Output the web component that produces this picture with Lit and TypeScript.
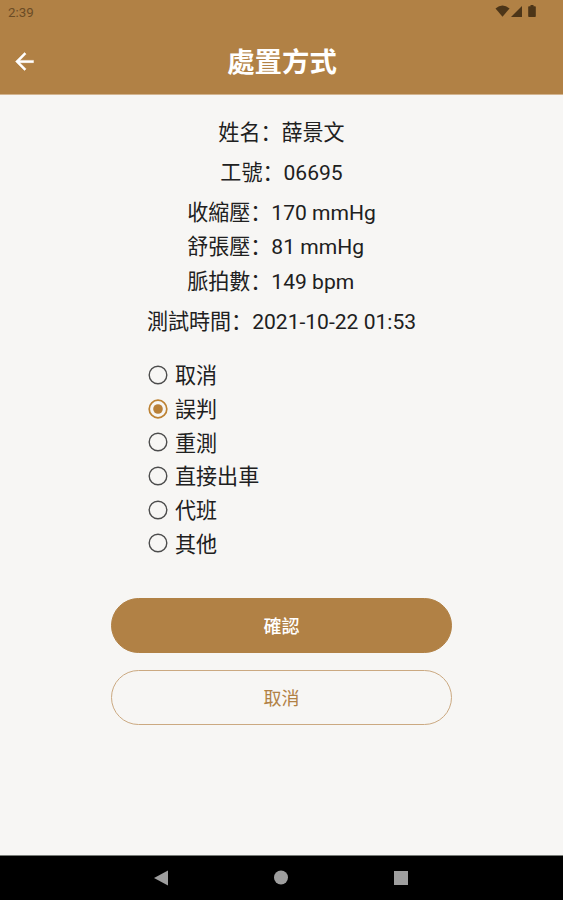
import { LitElement, html, css } from "lit";
import { customElement, state } from "lit/decorators.js";
import { classMap } from "lit/directives/class-map.js";

@customElement("app-root")
export class AppRoot extends LitElement {
  @state() private selected = "誤判";

  private options = ["取消", "誤判", "重測", "直接出車", "代班", "其他"];

  static styles = css`
    :host {
      display: flex;
      flex-direction: column;
      height: 900px;
      box-sizing: border-box;
      background: #f7f6f4;
      color: #202020;
      font-family: Roboto, "Noto Sans CJK SC", sans-serif;
      font-size: 21.05px;
      overflow: hidden;
    }
    .top {
      height: 95px;
      box-sizing: border-box;
      background: #b18145;
      border-bottom: 1px solid #d3b48f;
    }
    .status {
      height: 24px;
      display: flex;
      justify-content: space-between;
      padding: 0 26px 0 8px;
      color: #6b4c25;
      font-size: 13.3px;
      line-height: 25px;
    }
    .status svg {
      display: block;
      margin-top: 4px;
    }
    .bar {
      height: 70px;
      display: grid;
      grid-template-columns: 48px 1fr 48px;
      align-items: center;
      padding-top: 4px;
      box-sizing: border-box;
    }
    .back {
      display: block;
      margin-left: 11px;
    }
    h1 {
      margin: 0;
      padding: 4px 0 0 1px;
      color: #fff;
      text-align: center;
      font-size: 27.4px;
      line-height: 40px;
      font-weight: 700;
    }
    main {
      flex: 1;
      display: flex;
      flex-direction: column;
      align-items: center;
      padding-top: 18px;
    }
    .line {
      height: 40px;
      line-height: 40px;
      white-space: nowrap;
    }
    .readings {
      padding: 3px 0;
    }
    .readings .line {
      height: 34.4px;
      line-height: 34.4px;
    }
    .options {
      width: 267px;
      margin-top: 17px;
    }
    .option {
      display: flex;
      align-items: center;
      gap: 7px;
      height: 33.7px;
      line-height: 33.7px;
    }
    .radio {
      display: block;
      margin-bottom: 2px;
      fill: none;
      stroke: #4c4c4c;
      stroke-width: 1.4;
    }
    .dot {
      fill: none;
      stroke: none;
    }
    .on {
      stroke: #bd8233;
      stroke-width: 1.7;
    }
    .on .dot {
      fill: #b98038;
    }
    .actions {
      display: flex;
      flex-direction: column;
      gap: 17px;
      width: 341px;
      margin-top: 37px;
    }
    button {
      height: 55px;
      border-radius: 28px;
      border: 1px solid #b18145;
      padding: 0 0 2px;
      font-family: inherit;
      font-size: 18px;
    }
    .primary {
      background: #b18145;
      color: #fff;
      font-weight: 500;
    }
    .secondary {
      background: transparent;
      border-color: #cba981;
      color: #b18145;
    }
    .nav {
      height: 45px;
      box-sizing: border-box;
      background: #000;
      border-top: 1px solid #777b76;
      display: flex;
      justify-content: center;
      gap: 104px;
      align-items: center;
      padding-right: 1px;
    }
    .nav svg {
      display: block;
    }
  `;

  render() {
    return html`
      <header class="top">
        <div class="status">
          <span>2:39</span>
          <svg width="42" height="14" viewBox="0 0 42 14" fill="#4c3518">
            <path d="M0.500 4.400Q7.500 -1.500 14.500 4.400L7.500 12.800Z" />
            <path d="M16 13L27 2V13Z" />
            <path d="M34 2.300h1.500V1h3v1.300H40q.8 0 .8 .8V12.200q0 .8-.8 .8h-6q-.8 0-.8-.8V3.100q0-.8 .8-.8Z" />
          </svg>
        </div>
        <div class="bar">
          <svg class="back" width="27" height="27" viewBox="0 0 24 24" fill="#fff" stroke="#fff" stroke-width=".4">
            <path d="M20 11H7.830l5.590-5.590L12 4l-8 8 8 8 1.410-1.410L7.830 13H20v-2z" />
          </svg>
          <h1>處置方式</h1>
        </div>
      </header>
      <main>
        <div class="line">姓名：薛景文</div>
        <div class="line">工號：06695</div>
        <div class="readings">
          <div class="line">收縮壓：170 mmHg</div>
          <div class="line">舒張壓：81 mmHg</div>
          <div class="line">脈拍數：149 bpm</div>
        </div>
        <div class="line">測試時間：2021-10-22 01:53</div>
        <div class="options">
          ${this.options.map(
            (o) => html`<div class="option" @click=${() => (this.selected = o)}>
              <svg class=${classMap({ radio: true, on: o === this.selected })} width="20" height="20" viewBox="0 0 20 20">
                <circle cx="10" cy="10" r="8.800" />
                <circle class="dot" cx="10" cy="10" r="4.800" />
              </svg>
              <span>${o}</span>
            </div>`
          )}
        </div>
        <div class="actions">
          <button class="primary">確認</button>
          <button class="secondary">取消</button>
        </div>
      </main>
      <footer class="nav">
        <svg width="16" height="16" viewBox="0 0 16 16" fill="#9e9e9e"><path d="M1 8L15 0.500V15.500Z" /></svg>
        <svg width="16" height="16" viewBox="0 0 16 16" fill="#9e9e9e"><circle cx="8" cy="7.500" r="7" /></svg>
        <svg width="16" height="16" viewBox="0 0 16 16" fill="#9e9e9e"><path d="M1 1h14v14H1z" /></svg>
      </footer>
    `;
  }
}
